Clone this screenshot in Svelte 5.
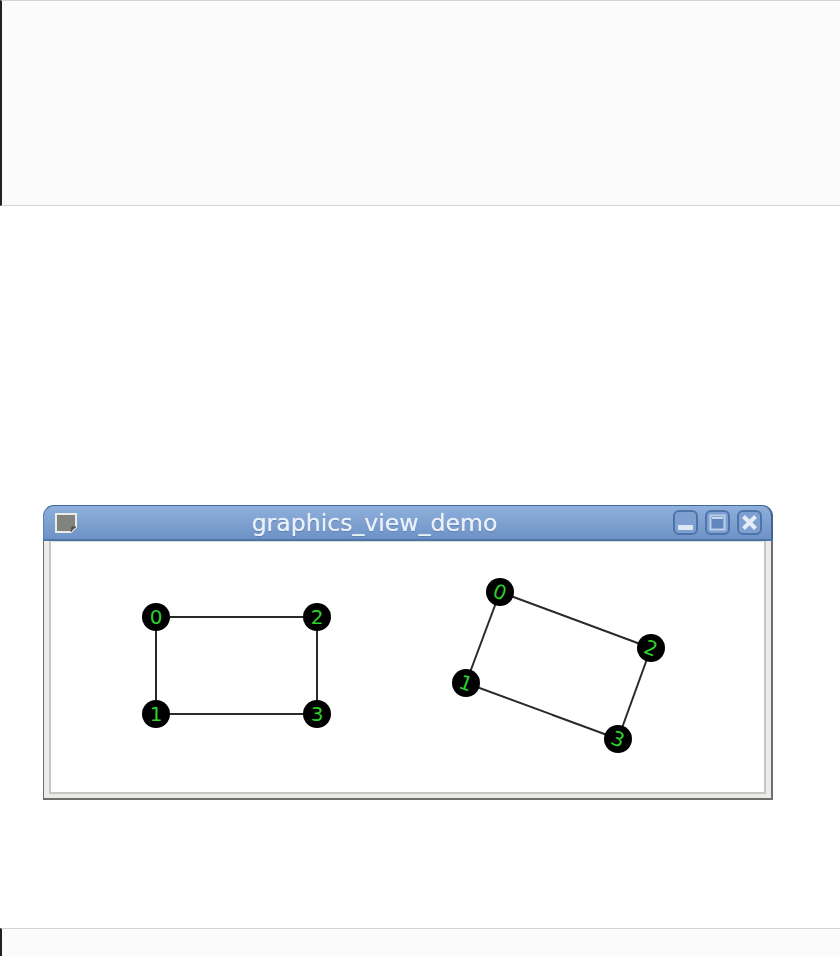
<script lang="ts">
  interface GraphNode { id: number, x: number, y: number }

  const flat: GraphNode[] = [
    { id: 0, x: 105, y: 76 },
    { id: 1, x: 105, y: 173 },
    { id: 2, x: 266, y: 76 },
    { id: 3, x: 266, y: 173 },
  ]
  const tilted: GraphNode[] = [
    { id: 0, x: 449, y: 51 },
    { id: 1, x: 415, y: 142 },
    { id: 2, x: 600, y: 107 },
    { id: 3, x: 567, y: 198 },
  ]
  const graphs = [
    { nodes: flat, angle: 0 },
    { nodes: tilted, angle: 20 },
  ]
  const edges = [[0, 1], [0, 2], [1, 3], [2, 3]]
</script>

<div class="page">
  <div class="code first"></div>

  <figure class="window">
    <div class="titlebar">
      <svg class="app-icon" width="24" height="22" viewBox="0 0 24 22">
        <path d="M2 2h20v13l-5 5H2z" fill="#82827e" stroke="#ecece6" stroke-width="2" />
        <path d="M17 20l1-5h4" fill="#5c5c5a" stroke="#4a4a48" stroke-width="1" />
      </svg>
      <span class="title">graphics_view_demo</span>
      <div class="buttons">
        <div class="btn">
          <svg width="25" height="25" viewBox="0 0 25 25"><rect x="3" y="13" width="15" height="5" rx="1" fill="#dfe8f4" /></svg>
        </div>
        <div class="btn">
          <svg width="25" height="25" viewBox="0 0 25 25"><rect x="3.5" y="3.5" width="14" height="14" fill="#5f86bd" stroke="#bccfe8" stroke-width="2" /><rect x="5" y="5" width="11" height="2" fill="#c6d6ec" /></svg>
        </div>
        <div class="btn">
          <svg width="25" height="25" viewBox="0 0 25 25"><path d="M4.5 4.5l12 12M16.5 4.5l-12 12" stroke="#e6edf6" stroke-width="4" /></svg>
        </div>
      </div>
    </div>
    <div class="frame">
      <div class="well">
        <svg class="scene" width="713" height="250" viewBox="0 1 713 250">
          {#each graphs as g}
            {#each edges as [a, b]}
              <line
                x1={g.nodes[a].x}
                y1={g.nodes[a].y}
                x2={g.nodes[b].x}
                y2={g.nodes[b].y}
                stroke="#2a2a2a"
                stroke-width="2"
              />
            {/each}
            {#each g.nodes as n}
              <circle cx={n.x} cy={n.y} r="14" fill="#000" />
              <text
                class="num"
                x={n.x}
                y={n.y + 7}
                transform="rotate({g.angle} {n.x} {n.y})"
              >{n.id}</text>
            {/each}
          {/each}
        </svg>
      </div>
    </div>
  </figure>

  <div class="code last"></div>
</div>

<style>
  :global(body) {
    background: #fff;
  }

  .page {
    width: 840px;
    height: 956px;
    overflow: hidden;
  }

  .code {
    background: #fbfbfb;
    border-left: 2px solid #222;
    box-sizing: border-box;
  }

  .first {
    height: 206px;
    border-top: 1px solid #d4d4d4;
    border-bottom: 1px solid #d4d4d4;
  }

  .last {
    height: 28px;
    margin-top: 128px;
    border-top: 1px solid #d4d4d4;
  }

  .window {
    width: 730px;
    height: 295px;
    margin: 299px 0 0 43px;
    box-sizing: border-box;
    filter: blur(0.6px);
  }

  .titlebar {
    height: 36px;
    box-sizing: border-box;
    display: flex;
    align-items: center;
    position: relative;
    padding: 0 9px 0 10px;
    border-radius: 11px 11px 0 0;
    border-top: 1px solid #3f659d;
    border-left: 1px solid #5b80b4;
    border-right: 2px solid #44648f;
    border-bottom: 2px solid #4e74aa;
    background: linear-gradient(#8fb0dc, #6d92c6);
  }

  .app-icon {
    display: block;
  }

  .title {
    position: absolute;
    left: 0;
    right: 66px;
    text-align: center;
    font-family: "DejaVu Sans", sans-serif;
    font-size: 23.6px;
    color: #eaf0f8;
    text-shadow: 0 0 1px #eaf0f8, 0 1px 1px #4f72a6;
  }

  .buttons {
    margin-left: auto;
    display: flex;
    gap: 7px;
  }

  .btn {
    width: 25px;
    height: 25px;
    box-sizing: border-box;
    border: 2px solid #4f74a9;
    border-radius: 6px;
    background: #7da0d0;
  }

  .btn svg {
    display: block;
  }

  .frame {
    height: 259px;
    box-sizing: border-box;
    padding: 0 5px 4px;
    background: #ecebe8;
    border: solid #6e6e6c;
    border-width: 0 2px 2px 1px;
  }

  .well {
    box-sizing: border-box;
    height: 253px;
    border: 2px solid #c6c6c2;
    border-top: 1px solid #d8d8d6;
    background: #fff;
  }

  .scene {
    display: block;
    background: #fff;
  }

  .num {
    font-family: "DejaVu Sans", sans-serif;
    font-size: 20px;
    fill: #2fcf2f;
    text-anchor: middle;
  }
</style>
